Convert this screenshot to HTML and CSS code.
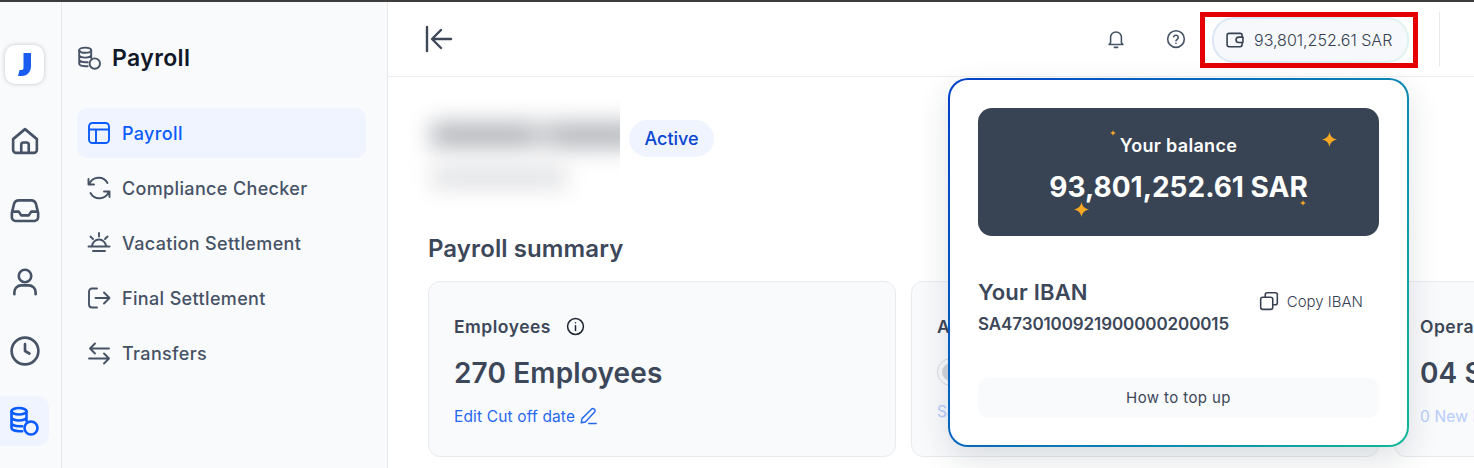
FILE: index.html
```html
<!DOCTYPE html>
<html lang="en">

<head>
    <meta charset="UTF-8">
    <title>Payroll</title>
    <link rel="stylesheet" href="styles.css">
</head>

<body>
    <div class="app">

        <!-- icon rail -->
        <aside class="rail">
            <div class="logo">
                <svg width="13" height="23" viewBox="0 0 13 23"><path d="M5.500 0H13v13c0 6-4 10-9 10H0l1.500-6H3.500C5 17 5.500 16 5.500 14.500z" fill="#1a5cf0"/></svg>
            </div>
            <a class="rail-item">
                <svg class="icon-30" viewBox="0 0 24 24"><path d="M2.500 10.500 12 2.500l9.500 8V19a2.500 2.500 0 0 1-2.500 2.500H5A2.500 2.500 0 0 1 2.500 19zM9 21.500V15a1.800 1.800 0 0 1 1.800-1.800h2.400A1.800 1.800 0 0 1 15 15v6.500"/></svg>
            </a>
            <a class="rail-item">
                <svg class="icon-30" viewBox="0 0 24 24"><path d="M1.500 13.500 3.300 6A4 4 0 0 1 7 3.500h10A4 4 0 0 1 20.700 6l1.800 7.500V17a3 3 0 0 1-3 3h-15a3 3 0 0 1-3-3zM1.800 12.500H7l2 3h6l2-3h5.200"/></svg>
            </a>
            <a class="rail-item">
                <svg class="icon-30" viewBox="0 0 24 24"><circle cx="12" cy="8" r="5"/><path d="M3.500 22.500V21a5.500 5.500 0 0 1 5.500-5.500h6a5.500 5.500 0 0 1 5.500 5.500v1.500"/></svg>
            </a>
            <a class="rail-item">
                <svg class="icon-30" viewBox="0 0 24 24"><circle cx="12" cy="12" r="10.700"/><path d="M12 6.500V12l3.500 2"/></svg>
            </a>
            <a class="rail-item active">
                <svg class="icon-30" viewBox="0 0 24 24"><ellipse cx="7.200" cy="4.200" rx="6" ry="2.600"/><path d="M1.200 4.200v13.400c0 1.500 2.700 2.600 6 2.600h2.500M1.200 9c0 1.400 2.700 2.600 6 2.600s6-1.200 6-2.600M1.200 13.600c0 1.400 2.700 2.600 6 2.600h2.500M13.200 4.200V12"/><circle cx="16.800" cy="17.600" r="5.200"/></svg>
            </a>
        </aside>

        <!-- sidebar -->
        <aside class="sidebar">
            <div class="sidebar-title">
                <svg class="icon-26" viewBox="0 0 24 24"><ellipse cx="7.200" cy="4.200" rx="6" ry="2.600"/><path d="M1.200 4.200v13.400c0 1.500 2.700 2.600 6 2.600h2.500M1.200 9c0 1.400 2.700 2.600 6 2.600s6-1.200 6-2.600M1.200 13.600c0 1.400 2.700 2.600 6 2.600h2.500M13.200 4.200V12"/><circle cx="16.800" cy="17.600" r="5.200"/></svg>
                <h2>Payroll</h2>
            </div>
            <nav class="nav">
                <a class="nav-item active">
                    <svg class="icon-26" viewBox="0 0 24 24"><rect x="2" y="2" width="20" height="20" rx="3.500"/><path d="M2 8.500h20M9 8.500V22"/></svg>
                    Payroll
                </a>
                <a class="nav-item">
                    <svg class="icon-26" viewBox="0 0 24 24"><path d="M1.500 3v5.500H7M22.500 21v-5.500H17M2.200 8.500A10 10 0 0 1 20.500 7M21.800 15.500A10 10 0 0 1 3.500 17"/></svg>
                    Compliance Checker
                </a>
                <a class="nav-item">
                    <svg class="icon-26" viewBox="0 0 24 24"><path d="M1.500 15.500h21M5 15.500a7 7 0 0 1 14 0M6 20h12M12 2v3.500M3.500 5.500l2.500 2.500M20.500 5.500 18 8"/></svg>
                    Vacation Settlement
                </a>
                <a class="nav-item">
                    <svg class="icon-26" viewBox="0 0 24 24"><path d="M10 2.500H5A3 3 0 0 0 2 5.500v13a3 3 0 0 0 3 3h5M8.500 12h14M17 6.500l5.500 5.500-5.500 5.500"/></svg>
                    Final Settlement
                </a>
                <a class="nav-item">
                    <svg class="icon-26" viewBox="0 0 24 24"><path d="M22 7.500H3M8 2.500l-5 5 5 5M2 17.500h20M17 12.500l5 5-5 5"/></svg>
                    Transfers
                </a>
            </nav>
        </aside>

        <main class="main">
            <header class="topbar">
                <button class="collapse">
                    <svg width="30" height="28" viewBox="0 0 30 28"><path d="M3 2v24M27 14H9M17 5l-9 9 9 9"/></svg>
                </button>
                <div class="topbar-right">
                    <svg class="icon-20 bell" viewBox="0 0 24 24"><path d="M5.500 16.500V10a6.500 6.500 0 0 1 13 0v6.500l1.800 2H3.700zM10 22h4"/></svg>
                    <svg class="icon-20 help" viewBox="0 0 24 24"><circle cx="12" cy="12" r="10"/><path d="M9.200 9.300a2.900 2.900 0 0 1 5.600 1c0 2-2.800 2.500-2.800 3.900M12 17.200v.1"/></svg>
                    <div class="highlight">
                        <div class="balance-chip">
                            <svg class="icon-20" viewBox="0 0 24 24"><path d="M20.500 8V6.500A2.500 2.500 0 0 0 18 4H5a2.500 2.500 0 0 0-2.500 2.500v11A2.500 2.500 0 0 0 5 20h13a2.500 2.500 0 0 0 2.500-2.500V16"/><path d="M16.500 8.500h5v6.500h-5a3.200 3.200 0 0 1 0-6.500z"/></svg>
                            93,801,252.61 SAR
                        </div>
                    </div>
                    <span class="divider"></span>
                </div>
            </header>

            <div class="content">
                <div class="company">
                    <div class="blurred">
                        <div class="blur-line one"></div>
                        <div class="blur-line two"></div>
                    </div>
                    <span class="badge">Active</span>
                </div>

                <h3 class="section-title">Payroll summary</h3>

                <div class="cards">
                    <section class="card">
                        <div class="card-label">Employees
                            <svg class="info" viewBox="0 0 24 24"><circle cx="12" cy="12" r="10"/><path d="M12 11v6M12 7.200v.1"/></svg>
                        </div>
                        <div class="card-value">270 Employees</div>
                        <a class="card-link">Edit Cut off date
                            <svg class="pencil" viewBox="0 0 24 24"><path d="M3 21l1-5.500L16.500 3a2.800 2.800 0 0 1 4 4L8.500 20zM13 22h10"/></svg>
                        </a>
                    </section>
                    <section class="card">
                        <div class="card-label">Amount</div>
                        <div class="avatar"><span></span></div>
                        <a class="card-link faded">Salaries</a>
                    </section>
                    <section class="card">
                        <div class="card-label">Operations</div>
                        <div class="card-value">04 Services</div>
                        <a class="card-link faded">0 New Entries</a>
                    </section>
                </div>
            </div>

            <!-- balance popup, sits over the page -->
            <div class="popup">
                <div class="balance-card">
                    <svg class="spark s1" viewBox="0 0 24 24"><path d="M12 0c1.500 7 4.500 10.500 12 12-7.500 1.500-10.500 5-12 12-1.500-7-4.500-10.500-12-12 7.500-1.500 10.500-5 12-12z"/></svg>
                    <svg class="spark s2" viewBox="0 0 24 24"><path d="M12 0c1.500 7 4.500 10.500 12 12-7.500 1.500-10.500 5-12 12-1.500-7-4.500-10.500-12-12 7.500-1.500 10.500-5 12-12z"/></svg>
                    <svg class="spark s3" viewBox="0 0 24 24"><path d="M12 0c1.500 7 4.500 10.500 12 12-7.500 1.500-10.500 5-12 12-1.500-7-4.500-10.500-12-12 7.500-1.500 10.500-5 12-12z"/></svg>
                    <svg class="spark s4" viewBox="0 0 24 24"><path d="M12 0c1.500 7 4.500 10.500 12 12-7.500 1.500-10.500 5-12 12-1.500-7-4.500-10.500-12-12 7.500-1.500 10.500-5 12-12z"/></svg>
                    <div class="balance-label">Your balance</div>
                    <div class="balance-amount">93,801,252.61 SAR</div>
                </div>
                <div class="iban-row">
                    <div>
                        <div class="iban-title">Your IBAN</div>
                        <div class="iban-number">SA4730100921900000200015</div>
                    </div>
                    <button class="copy">
                        <svg class="icon-20" viewBox="0 0 24 24"><rect x="2" y="7.500" width="14.500" height="14.500" rx="2.500"/><path d="M7.500 7.500V4.500A2.500 2.500 0 0 1 10 2h9.500A2.500 2.500 0 0 1 22 4.500V14a2.500 2.500 0 0 1-2.500 2.500h-3"/></svg>
                        Copy IBAN
                    </button>
                </div>
                <button class="topup">How to top up</button>
            </div>
        </main>
    </div>
</body>

</html>
```

FILE: styles.css
```css
* {
    box-sizing: border-box;
}

body {
    margin: 0;
    height: 468px;
    overflow: hidden;
    border-top: 2px solid #3d3d3d;
    font-family: "Inter", "Open Sans", sans-serif;
    color: #374151;
    background: #fff;
}

svg {
    fill: none;
    stroke: currentColor;
    stroke-width: 1.9;
    stroke-linecap: round;
    stroke-linejoin: round;
    flex-shrink: 0;
}

.icon-30 {
    width: 30px;
    height: 30px;
    stroke-width: 2.1;
}

.icon-26 {
    width: 24px;
    height: 24px;
}

.icon-20 {
    width: 20px;
    height: 20px;
}

.app {
    display: flex;
    height: 466px;
}

/* rail */

.rail {
    width: 62px;
    flex-shrink: 0;
    background: #f9fafc;
    border-right: 1px solid #e6e8ec;
    display: flex;
    flex-direction: column;
    gap: 20px;
    padding-top: 43px;
    color: #465265;
}

.logo {
    width: 39px;
    height: 39px;
    margin: 0 0 12px 5px;
    background: #fff;
    border-radius: 10px;
    box-shadow: 0 0 4px rgb(0 0 0 / 22%);
    display: flex;
    align-items: center;
    justify-content: center;
}

.logo svg {
    stroke: none;
}

.rail-item {
    width: 49px;
    height: 50px;
    display: flex;
    align-items: center;
    justify-content: center;
}

.rail-item.active {
    background: #eff4ff;
    border-radius: 0 12px 12px 0;
    color: #0a5cff;
}

/* sidebar */

.sidebar {
    width: 326px;
    flex-shrink: 0;
    background: #f9fafc;
    border-right: 1px solid #e6e8ec;
    padding: 40px 21px 0 15px;
}

.sidebar-title {
    display: flex;
    align-items: center;
    gap: 10px;
    height: 32px;
    padding-left: 1px;
    color: #111827;
}

.sidebar-title svg {
    color: #465265;
}

.sidebar-title h2 {
    margin: 0;
    font-size: 23px;
    font-weight: 600;
    letter-spacing: 0.4px;
}

.nav {
    display: flex;
    flex-direction: column;
    gap: 5px;
    margin-top: 34px;
}

.nav-item {
    display: flex;
    align-items: center;
    gap: 11px;
    height: 50px;
    padding-left: 10px;
    border-radius: 10px;
    font-size: 18px;
    letter-spacing: 0.35px;
    font-weight: 500;
    color: #465265;
}

.nav-item.active {
    background: #eff4ff;
    color: #0a5cff;
}

/* main */

.main {
    flex: 1;
    min-width: 0;
    position: relative;
    overflow: hidden;
}

.topbar {
    height: 75px;
    border-bottom: 1px solid #eceef1;
    display: flex;
    align-items: center;
    justify-content: space-between;
    padding-left: 36px;
}

.collapse {
    border: 0;
    background: none;
    padding: 0;
    color: #3d4757;
    display: flex;
}

.collapse svg {
    stroke-width: 2.4;
}

.topbar-right {
    display: flex;
    align-items: center;
    color: #465265;
}

.bell {
    margin-right: 40px;
}

.help {
    margin-right: 14px;
}

.highlight {
    border: 5px solid #e40000;
    width: 218px;
    height: 56px;
    margin-top: 2px;
    padding-left: 7px;
    display: flex;
    align-items: center;
}

.balance-chip {
    width: 197px;
    height: 46px;
    border-radius: 22px;
    border: 2px solid transparent;
    background: linear-gradient(#f6f8fb, #f6f8fb) padding-box, linear-gradient(90deg, #dce6f6, #dff3ee) border-box;
    display: flex;
    align-items: center;
    gap: 9px;
    padding-left: 11px;
    font-size: 16px;
    font-weight: 300;
    color: #374151;
    white-space: nowrap;
}

.divider {
    width: 1px;
    height: 54px;
    background: #e6e8ec;
    margin: 0 34px 0 21px;
}

.content {
    padding: 16px 0 0 40px;
}

.company {
    display: flex;
    align-items: flex-start;
    margin-left: -21px;
}

.blurred {
    width: 213px;
    height: 114px;
    overflow: hidden;
    padding: 29px 0 0 24px;
}

.blur-line {
    filter: blur(11px);
}

.blur-line.one {
    width: 210px;
    height: 26px;
    background: linear-gradient(90deg, #b4b7bc 45%, #d0d2d5 52%, #b4b7bc 62%);
}

.blur-line.two {
    width: 136px;
    height: 24px;
    margin-top: 17px;
    background: #e2e3e5;
}

.badge {
    margin: 27px 0 0 9px;
    height: 37px;
    width: 85px;
    border-radius: 19px;
    background: #eff4ff;
    color: #0b47d0;
    font-size: 18px;
    font-weight: 500;
    display: flex;
    align-items: center;
    justify-content: center;
}

.section-title {
    margin: 27px 0 17px;
    height: 30px;
    line-height: 30px;
    font-size: 24px;
    font-weight: 600;
    letter-spacing: 0.1px;
    color: #3c4759;
}

.cards {
    display: grid;
    grid-template-columns: repeat(3, 468px);
    gap: 15px;
}

.card {
    height: 176px;
    background: #f9fafc;
    border: 1px solid #e8eaee;
    border-radius: 12px;
    padding: 32px 25px 0;
}

.card-label {
    display: flex;
    align-items: center;
    gap: 15px;
    height: 24px;
    font-size: 17.500px;
    font-weight: 600;
    letter-spacing: 0.5px;
    color: #3c4759;
    white-space: nowrap;
}

.info {
    width: 19px;
    height: 19px;
    color: #1f2430;
}

.card-value {
    margin-top: 17px;
    height: 36px;
    line-height: 36px;
    font-size: 28px;
    font-weight: 600;
    letter-spacing: 0.15px;
    color: #3c4759;
    white-space: nowrap;
}

.card-link {
    margin-top: 15px;
    display: flex;
    align-items: center;
    gap: 4px;
    height: 20px;
    font-size: 15.500px;
    letter-spacing: 0.15px;
    color: #2767f0;
    white-space: nowrap;
}

.card-link.faded {
    color: #b6ccfb;
}

.pencil {
    width: 18px;
    height: 18px;
}

.avatar {
    margin-top: 20px;
    width: 28px;
    height: 28px;
    border: 1px solid #d8dbe0;
    border-radius: 50%;
    display: flex;
    align-items: center;
    justify-content: center;
}

.avatar span {
    width: 18px;
    height: 18px;
    border-radius: 50%;
    background: #d4d7dc;
}

/* popup */

.popup {
    position: absolute;
    top: 76px;
    left: 560px;
    width: 461px;
    height: 369px;
    border: 2px solid transparent;
    border-radius: 20px;
    background: linear-gradient(#fff, #fff) padding-box, linear-gradient(125deg, #0040c8, #0a7cb5 55%, #10b898) border-box;
    box-shadow: 0 12px 32px rgb(30 40 60 / 14%);
    padding: 28px;
}

.balance-card {
    position: relative;
    height: 128px;
    border-radius: 14px;
    background: #384354;
    color: #fff;
    text-align: center;
    padding-top: 25px;
}

.balance-label {
    height: 25px;
    line-height: 25px;
    font-size: 18px;
    font-weight: 600;
    letter-spacing: 0.3px;
}

.balance-amount {
    margin-top: 9px;
    height: 40px;
    line-height: 40px;
    font-size: 28px;
    font-weight: 700;
}

.spark {
    position: absolute;
    stroke: none;
    fill: #f6a723;
}

.s1 {
    width: 6px;
    height: 6px;
    left: 132px;
    top: 22px;
}

.s2 {
    width: 15px;
    height: 15px;
    left: 344px;
    top: 24px;
}

.s3 {
    width: 15px;
    height: 15px;
    left: 96px;
    top: 94px;
}

.s4 {
    width: 6px;
    height: 6px;
    left: 322px;
    top: 92px;
}

.iban-row {
    display: flex;
    justify-content: space-between;
    align-items: flex-start;
    margin-top: 41px;
}

.iban-title {
    height: 30px;
    line-height: 30px;
    font-size: 22px;
    font-weight: 600;
    letter-spacing: 0.2px;
    color: #3c4759;
}

.iban-number {
    margin-top: 7px;
    font-size: 17px;
    font-weight: 600;
    line-height: 20px;
    letter-spacing: -0.1px;
    color: #3c4759;
}

.copy {
    display: flex;
    align-items: center;
    gap: 8px;
    border: 0;
    background: none;
    padding: 0;
    margin: 14px 16px 0 0;
    font-family: inherit;
    font-size: 15px;
    font-weight: 300;
    color: #374151;
}

.topup {
    display: block;
    width: 401px;
    height: 40px;
    margin-top: 44px;
    padding: 0 0 2px;
    border: 0;
    border-radius: 10px;
    background: #f9fafb;
    font-family: inherit;
    font-size: 15px;
    letter-spacing: 0.4px;
    color: #3c4759;
}
```
